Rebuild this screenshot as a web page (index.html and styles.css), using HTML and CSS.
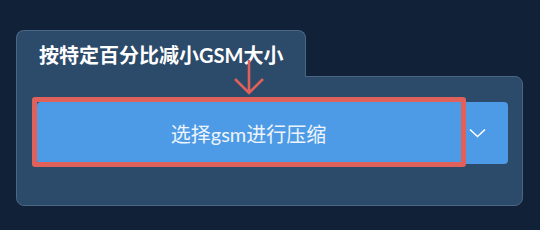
FILE: index.html
```html
<!DOCTYPE html>
<html lang="zh">
<head>
  <meta charset="UTF-8" />
  <title>GSM压缩</title>
  <link rel="stylesheet" href="styles.css">
</head>
<body>
  <div class="card">
    <div class="tab">按特定百分比减小GSM大小</div>
    <div class="panel">
      <div class="btn-group">
        <button class="main-btn">选择gsm进行压缩</button>
        <button class="drop-btn">
          <svg width="17" height="10" viewBox="0 0 17 10"><path d="M1 1.5 L8.5 8.5 L16 1.5" fill="none" stroke="#fff" stroke-width="1.6"/></svg>
        </button>
        <div class="highlight"></div>
      </div>
    </div>

    <!-- annotation arrow -->
    <svg class="arrow" width="32" height="36" viewBox="0 0 32 36">
      <path d="M16 0 L16 33 M2 19 L16 33 L30 19" fill="none" stroke="#e0605a" stroke-width="2.6"/>
    </svg>
  </div>
</body>
</html>
```

FILE: styles.css
```css
body {
  margin: 0;
  background: #112238;
  font-family: Lato, "Noto Sans CJK SC", sans-serif;
}

.card {
  position: relative;
  width: 507px;
  margin: 30px 0 0 16px;
}

.tab {
  display: inline-block;
  position: relative;
  z-index: 1;
  margin-bottom: -1px;
  padding: 3px 22px 0;
  box-sizing: border-box;
  height: 47px;
  line-height: 42px;
  background: #2c4a6a;
  border: 1px solid #4b6585;
  border-bottom: none;
  border-radius: 8px 8px 0 0;
  color: #fff;
  font-size: 20px;
  font-weight: bold;
}

.panel {
  height: 130px;
  box-sizing: border-box;
  padding: 25px 14px 0 20px;
  background: #2c4a6a;
  border: 1px solid #4b6585;
  border-radius: 0 8px 8px 8px;
}

.btn-group {
  position: relative;
  display: flex;
  height: 62px;
}

.main-btn {
  flex: 1;
  border: none;
  border-radius: 4px 0 0 4px;
  background: #4d9be6;
  color: #eef4fb;
  font-family: inherit;
  font-size: 20px;
  padding: 0;
}

.drop-btn {
  width: 48px;
  border: none;
  border-radius: 0 4px 4px 0;
  background: #4d9be6;
  padding: 0 0 0 9px;
  display: flex;
  align-items: center;
}

.highlight {
  position: absolute;
  left: -5px;
  top: -5px;
  width: 434px;
  height: 70px;
  box-sizing: border-box;
  border: 5px solid #e0605a;
  border-radius: 3px;
}

.arrow {
  position: absolute;
  left: 217px;
  top: 30px;
  z-index: 2;
}
```
